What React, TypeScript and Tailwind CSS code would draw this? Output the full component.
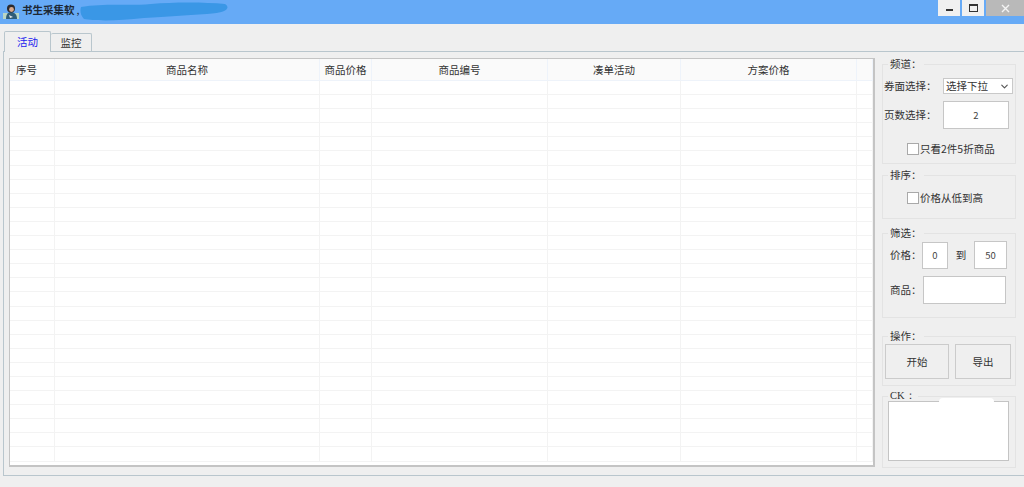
import { ChevronDown } from 'lucide-react'

const font = "font-['Noto_Sans_CJK_SC','Noto_Sans',sans-serif]"

const columns = [
    { name: '序号', width: 'w-[45px]', align: 'text-left pl-[6px]' },
    { name: '商品名称', width: 'w-[265px]', align: 'text-center' },
    { name: '商品价格', width: 'w-[52px]', align: 'text-center' },
    { name: '商品编号', width: 'w-[176px]', align: 'text-center' },
    { name: '凑单活动', width: 'w-[133px]', align: 'text-center' },
    { name: '方案价格', width: 'w-[176px]', align: 'text-center' },
    { name: '', width: 'flex-1', align: '' },
]

const rows = Array.from({ length: 27 })

function GroupBox({ title, className, children, serif }: { title: string; className: string; children?: React.ReactNode; serif?: boolean }) {
    return (
        <div className={`border border-[#e3e3e3] ${className}`}>
            <div className={`-mt-[8px] ml-[5px] w-fit bg-[#efefef] px-[2px] h-[14px] leading-[14px] text-[10.5px] text-[#333] whitespace-nowrap ${serif ? "font-['Liberation_Serif',serif]" : ''}`}>
                {title}
            </div>
            {children}
        </div>
    )
}

function Box({ children, className }: { children?: React.ReactNode; className: string }) {
    return (
        <div className={`flex items-center justify-center bg-white border border-[#c6c6c6] text-[9.5px] text-[#444] ${className}`}>
            {children}
        </div>
    )
}

function Check({ label, className }: { label: string; className: string }) {
    return (
        <div className={`flex items-center text-[10.5px] text-[#333] whitespace-nowrap ${className}`}>
            <div className="w-[12px] h-[12px] bg-white border border-[#a9a9a9]" />
            <span className="ml-[1px]">{label}</span>
        </div>
    )
}

export default function App() {
    return (
        <div className={`w-[1024px] h-[487px] overflow-hidden flex flex-col bg-[#efefef] ${font}`}>
            {/* Title bar */}
            <div className="h-[24px] shrink-0 bg-[#66aaf6] flex items-start">
                <svg className="ml-[3px] mt-[3px] shrink-0" width="16" height="16" viewBox="0 0 16 16">
                    <rect x="0" y="10" width="16" height="6" fill="#b9d6c4" />
                    <path d="M3 16 C3 10 6 9 8 9 C11 9 14 11 14 16 Z" fill="#2f5d78" />
                    <circle cx="8" cy="5.5" r="4" fill="#2c2a2c" />
                    <circle cx="8.5" cy="6.5" r="2.4" fill="#d9a98c" />
                    <path d="M6 12 L10 14 L7 15 Z" fill="#e8e8e8" />
                </svg>
                <span className="ml-[3px] mt-[2px] text-[10.5px] leading-[16px] font-bold text-[#1c2733] whitespace-nowrap">书生采集软</span>
                <span className="ml-[2px] mt-[2px] text-[10.5px] leading-[16px] text-[#1c2733]">,</span>
                <svg className="ml-0 shrink-0" width="150" height="24" viewBox="0 0 150 24">
                    <path d="M2 7 C25 3 50 6 72 4 C95 2 125 2 146 4 C151 7 150 13 128 14 C105 15 90 17 65 18 C40 21 15 21 5 19 C1 15 1 10 2 7 Z" fill="#3a97e6" />
                </svg>
                <div className="ml-auto flex gap-[2px]">
                    <div className="w-[22px] h-[16px] bg-[#f0f0f0] flex items-center justify-center">
                        <div className="w-[7px] h-[2px] mt-[4px] bg-[#333]" />
                    </div>
                    <div className="w-[22px] h-[16px] bg-[#f0f0f0] flex items-center justify-center">
                        <div className="w-[9px] h-[8px] border border-t-2 border-[#333]" />
                    </div>
                    <div className="w-[38px] h-[16px] bg-[#b9b9b9] flex items-center justify-center">
                        <svg width="9" height="9" viewBox="0 0 9 9" stroke="#f4f4f4" strokeWidth="1.4">
                            <path d="M1 1 L8 8 M8 1 L1 8" />
                        </svg>
                    </div>
                </div>
            </div>

            {/* Tabs */}
            <div className="h-[27px] shrink-0 pl-[4px] flex items-end text-[10.5px]">
                <div className="w-[47px] h-[21px] -mb-[1px] relative bg-[#efefef] border border-b-0 border-[#b9c6cd] rounded-t-[2px] text-center leading-[19px] text-[#2222ee]">
                    活动
                </div>
                <div className="w-[41px] h-[18px] border border-l-0 border-b-0 border-[#b9c6cd] rounded-t-[2px] text-center leading-[17px] text-[#333]">
                    监控
                </div>
            </div>

            {/* Tab page */}
            <div className="h-[425px] shrink-0 ml-[3px] border-l border-t border-b border-[#b9c6cd] flex">
                {/* Grid */}
                <div className="ml-[5px] mt-[6px] w-[866px] h-[409px] shrink-0 bg-white border border-[#c4c4c4] border-b-2 border-r-2 overflow-hidden flex flex-col">
                    <div className="h-[22px] shrink-0 flex bg-[#fafafa] border-b border-[#eef3fa]">
                        {columns.map((c, i) => (
                            <div key={i} className={`${c.width} ${c.align} shrink-0 border-r border-[#eef3fa] text-[10.5px] leading-[22px] text-[#333]`}>
                                {c.name}
                            </div>
                        ))}
                    </div>
                    {rows.map((_, r) => (
                        <div key={r} className="h-[14.1px] shrink-0 flex border-b border-[#f3f3f3]">
                            {columns.map((c, i) => (
                                <div key={i} className={`${c.width} shrink-0 border-r border-[#f3f3f3]`} />
                            ))}
                        </div>
                    ))}
                </div>

                {/* Right panel */}
                <div className="ml-[7px] pt-[12px] w-[134px] shrink-0 flex flex-col">
                    <GroupBox title="频道：" className="h-[100px] shrink-0">
                        <div className="flex items-center mt-[7px] pl-[1px]">
                            <span className="text-[10.5px] text-[#333] w-[59px] whitespace-nowrap">券面选择：</span>
                            <div className="w-[70px] h-[16px] bg-white border border-[#c9c9c9] flex items-center text-[10.5px] text-[#333] pl-[2px] whitespace-nowrap">
                                <span className="flex-1">选择下拉</span>
                                <ChevronDown size={11} strokeWidth={2.5} className="mr-[2px] text-[#555]" />
                            </div>
                        </div>
                        <div className="flex items-center mt-[7px] pl-[1px]">
                            <span className="text-[10.5px] text-[#333] w-[59px] whitespace-nowrap">页数选择：</span>
                            <Box className="w-[66px] h-[28px]">2</Box>
                        </div>
                        <Check label="只看2件5折商品" className="ml-[24px] mt-[12px]" />
                    </GroupBox>

                    <GroupBox title="排序：" className="mt-[11px] h-[44px] shrink-0">
                        <Check label="价格从低到高" className="ml-[24px] mt-[8px]" />
                    </GroupBox>

                    <GroupBox title="筛选：" className="mt-[14px] h-[85px] shrink-0">
                        <div className="flex items-center mt-[1px] pl-[7px] text-[10.5px] text-[#333] whitespace-nowrap">
                            <span className="w-[32px]">价格：</span>
                            <Box className="w-[26px] h-[27px]">0</Box>
                            <span className="w-[26px] text-center">到</span>
                            <Box className="w-[33px] h-[28px]">50</Box>
                        </div>
                        <div className="flex items-center mt-[7px] pl-[7px] text-[10.5px] text-[#333] whitespace-nowrap">
                            <span className="w-[33px]">商品：</span>
                            <Box className="w-[83px] h-[28px]" />
                        </div>
                    </GroupBox>

                    <GroupBox title="操作：" className="mt-[18px] h-[50px] shrink-0">
                        <div className="flex pl-[2px] mt-[1px] gap-[6px] text-[10.5px] text-[#333]">
                            <div className="w-[64px] h-[35px] border border-[#cbcbcb] flex items-center justify-center">开始</div>
                            <div className="w-[56px] h-[35px] border border-[#cbcbcb] flex items-center justify-center">导出</div>
                        </div>
                    </GroupBox>

                    <GroupBox title="CK：" serif className="mt-[10px] h-[72px] shrink-0">
                        <div className="ml-[5px] -mt-[2px] w-[121px] h-[60px] bg-white border border-[#c4c4c4] relative">
                            <div className="absolute left-[50px] -top-[4px] w-[55px] h-[4px] bg-white rounded-t-full" />
                        </div>
                    </GroupBox>
                </div>
            </div>
        </div>
    )
}
